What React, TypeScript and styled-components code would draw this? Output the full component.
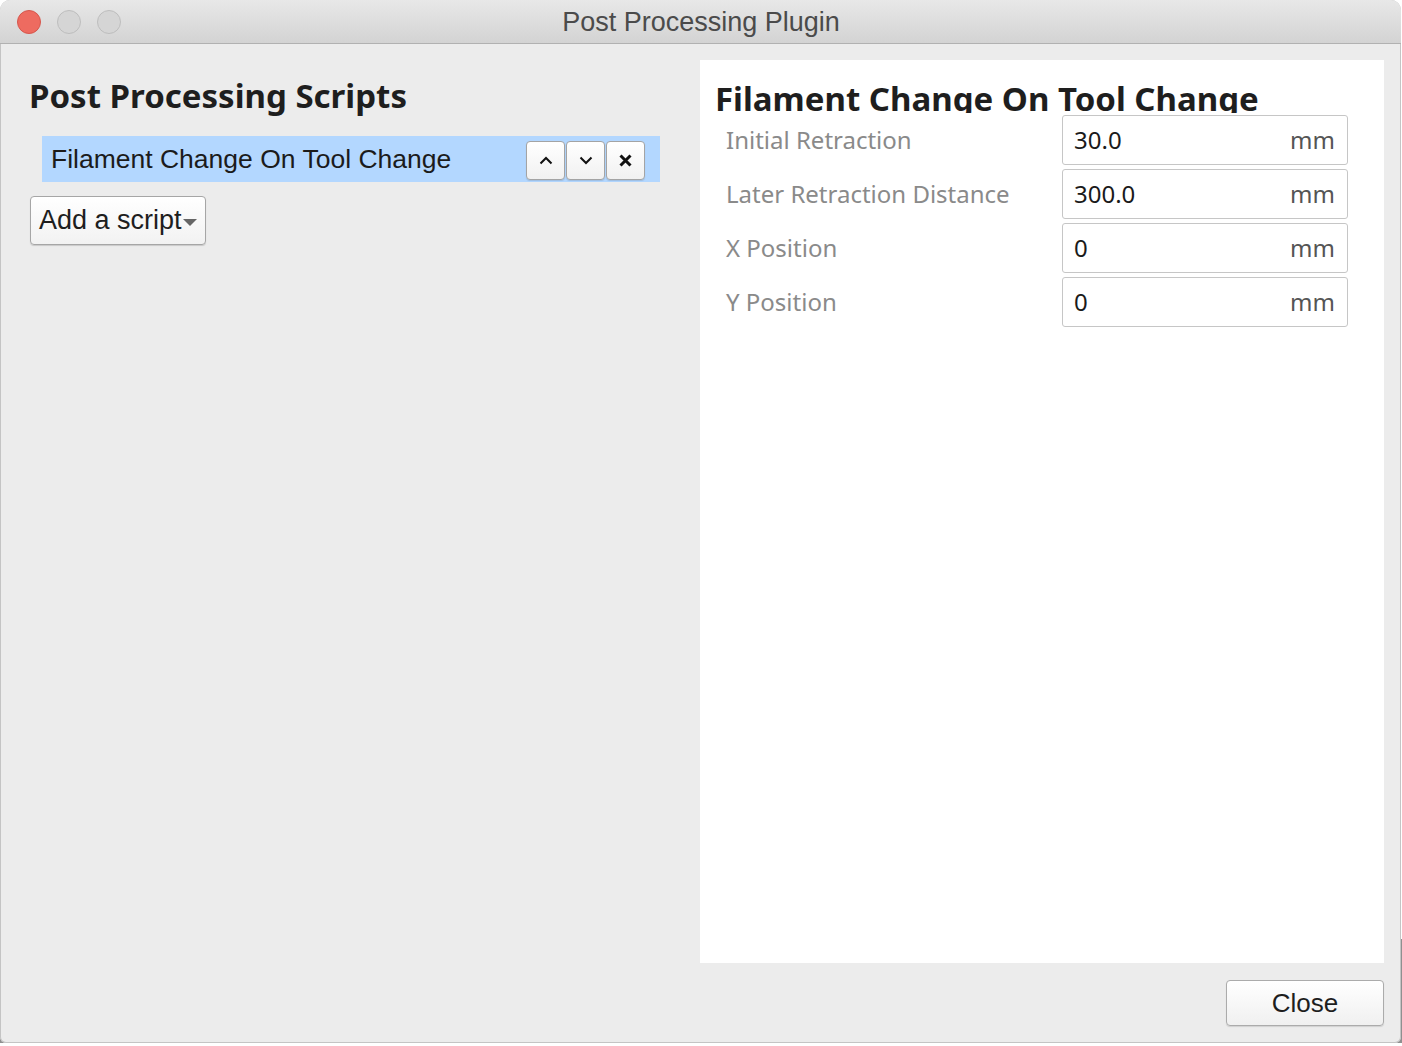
import React from 'react';
import styled, { createGlobalStyle } from 'styled-components';

const GlobalStyle = createGlobalStyle`
  html, body {
    margin: 0;
    padding: 0;
  }
  body {
    background: linear-gradient(#ffffff 0 90%, #8f8f8f 90%);
    font-family: "Liberation Sans", Arial, sans-serif;
  }
`;

const Window = styled.div`
  width: 1401px;
  height: 1043px;
  display: flex;
  flex-direction: column;
  background: #ececec;
  border-radius: 10px 10px 6px 6px;
  box-shadow: inset 0 0 0 1px #c4c4c4;
  overflow: hidden;
`;

const TitleBar = styled.div`
  height: 43px;
  flex: 0 0 43px;
  display: grid;
  grid-template-columns: 1fr auto 1fr;
  align-items: center;
  background: linear-gradient(#e8e8e8, #d3d3d3);
  border-bottom: 1px solid #b1b1b1;
  padding: 0 16px 0 17px;
`;

const Lights = styled.div`
  display: flex;
  gap: 16px;
`;

const Light = styled.span<{ $red?: boolean }>`
  width: 24px;
  height: 24px;
  border-radius: 50%;
  box-sizing: border-box;
  background: ${(p) => (p.$red ? '#ee6b60' : '#d5d5d5')};
  border: 1px solid ${(p) => (p.$red ? '#d5574d' : '#bdbdbd')};
`;

const Title = styled.div`
  font-size: 27px;
  color: #4b4b4b;
  margin-top: 2px;
`;

const Body = styled.div`
  flex: 1;
  display: flex;
  min-height: 0;
`;

const LeftColumn = styled.div`
  flex: 0 0 700px;
  box-sizing: border-box;
  padding: 35px 40px 0 29px;
  display: flex;
  flex-direction: column;
  align-items: flex-start;
`;

const Heading = styled.h1<{ $clipped?: boolean }>`
  margin: 0;
  font-family: "Noto Sans", "Open Sans", sans-serif;
  font-weight: 700;
  font-size: 33px;
  line-height: 33px;
  color: #1e1e1e;
  white-space: nowrap;
  height: ${(p) => (p.$clipped ? '31px' : 'auto')};
  overflow: ${(p) => (p.$clipped ? 'hidden' : 'visible')};
`;

const ScriptItem = styled.div`
  align-self: stretch;
  margin: 24px 0 0 13px;
  height: 46px;
  background: #b3d7ff;
  display: flex;
  align-items: center;
  padding: 0 15px 0 9px;
`;

const ItemName = styled.span`
  flex: 1;
  font-size: 26.5px;
  color: #1b1b1b;
  margin-top: 1px;
`;

const IconButtons = styled.div`
  display: flex;
  gap: 1px;
  margin-top: 2px;
`;

const IconButton = styled.button`
  width: 39px;
  height: 39px;
  box-sizing: border-box;
  padding: 0;
  display: flex;
  align-items: center;
  justify-content: center;
  border: 1px solid #a4a4a4;
  border-radius: 4px;
  background: linear-gradient(#ffffff, #f1f1f1);
  box-shadow: 0 1px 1px rgba(0, 0, 0, 0.12);
`;

const DropButton = styled.button`
  margin-top: 14px;
  margin-left: 1px;
  height: 49px;
  box-sizing: border-box;
  display: flex;
  align-items: center;
  gap: 1px;
  padding: 0 8px 0 8px;
  font-family: "Liberation Sans", Arial, sans-serif;
  font-size: 27px;
  color: #1e1e1e;
  border: 1px solid #a6a6a6;
  border-radius: 4px;
  background: linear-gradient(#ffffff, #f2f2f2);
  box-shadow: 0 1px 1px rgba(0, 0, 0, 0.15);
`;

const Caret = styled.span`
  width: 0;
  height: 0;
  margin-top: 4px;
  border-left: 7px solid transparent;
  border-right: 7px solid transparent;
  border-top: 7px solid #666;
`;

const RightColumn = styled.div`
  flex: 1;
  display: flex;
  flex-direction: column;
  padding: 16px 17px 17px 0;
`;

const SettingsPanel = styled.div`
  flex: 1;
  background: #ffffff;
  padding: 22px 36px 0 15px;
  display: flex;
  flex-direction: column;
`;

const SettingList = styled.div`
  margin-top: 2px;
  display: flex;
  flex-direction: column;
  gap: 4px;
`;

const SettingRow = styled.div`
  display: grid;
  grid-template-columns: 1fr 286px;
  align-items: center;
  padding-left: 11px;
`;

const Label = styled.span`
  font-family: "Noto Sans", "Open Sans", sans-serif;
  font-size: 24px;
  color: #8a8a8a;
  margin-top: -2px;
`;

const Field = styled.div`
  height: 50px;
  box-sizing: border-box;
  display: flex;
  align-items: center;
  justify-content: space-between;
  padding: 0 12px 2px 11px;
  border: 1px solid #c6c6c6;
  border-radius: 3px;
  font-family: "Noto Sans", "Open Sans", sans-serif;
  font-size: 24px;
  color: #1a1a1a;
`;

const Unit = styled.span`
  color: #555555;
`;

const Footer = styled.div`
  display: flex;
  justify-content: flex-end;
  padding-top: 17px;
`;

const CloseButton = styled.button`
  width: 158px;
  height: 46px;
  box-sizing: border-box;
  font-family: "Liberation Sans", Arial, sans-serif;
  font-size: 26px;
  color: #1e1e1e;
  border: 1px solid #ababab;
  border-radius: 4px;
  background: linear-gradient(#ffffff, #f0f0f0);
  box-shadow: 0 1px 1px rgba(0, 0, 0, 0.12);
`;

const Chevron = ({ up }: { up?: boolean }) => (
  <svg width="14" height="9" viewBox="0 0 14 9">
    <path
      d={up ? 'M1.5 7.5 7 2l5.5 5.5' : 'M1.5 1.5 7 7l5.5-5.5'}
      fill="none"
      stroke="#111"
      strokeWidth="2"
    />
  </svg>
);

const Cross = () => (
  <svg width="13" height="13" viewBox="0 0 13 13">
    <path d="M1.5 1.5l10 10M11.5 1.5l-10 10" stroke="#111" strokeWidth="3" />
  </svg>
);

const settings = [
  { label: 'Initial Retraction', value: '30.0' },
  { label: 'Later Retraction Distance', value: '300.0' },
  { label: 'X Position', value: '0' },
  { label: 'Y Position', value: '0' },
];

export default function App() {
  return (
    <>
      <GlobalStyle />
      <Window>
        <TitleBar>
          <Lights>
            <Light $red />
            <Light />
            <Light />
          </Lights>
          <Title>Post Processing Plugin</Title>
          <div />
        </TitleBar>
        <Body>
          <LeftColumn>
            <Heading>Post Processing Scripts</Heading>
            <ScriptItem>
              <ItemName>Filament Change On Tool Change</ItemName>
              <IconButtons>
                <IconButton><Chevron up /></IconButton>
                <IconButton><Chevron /></IconButton>
                <IconButton><Cross /></IconButton>
              </IconButtons>
            </ScriptItem>
            <DropButton>
              Add a script
              <Caret />
            </DropButton>
          </LeftColumn>
          <RightColumn>
            <SettingsPanel>
              <Heading $clipped>Filament Change On Tool Change</Heading>
              <SettingList>
                {settings.map((s) => (
                  <SettingRow key={s.label}>
                    <Label>{s.label}</Label>
                    <Field>
                      <span>{s.value}</span>
                      <Unit>mm</Unit>
                    </Field>
                  </SettingRow>
                ))}
              </SettingList>
            </SettingsPanel>
            <Footer>
              <CloseButton>Close</CloseButton>
            </Footer>
          </RightColumn>
        </Body>
      </Window>
    </>
  );
}
